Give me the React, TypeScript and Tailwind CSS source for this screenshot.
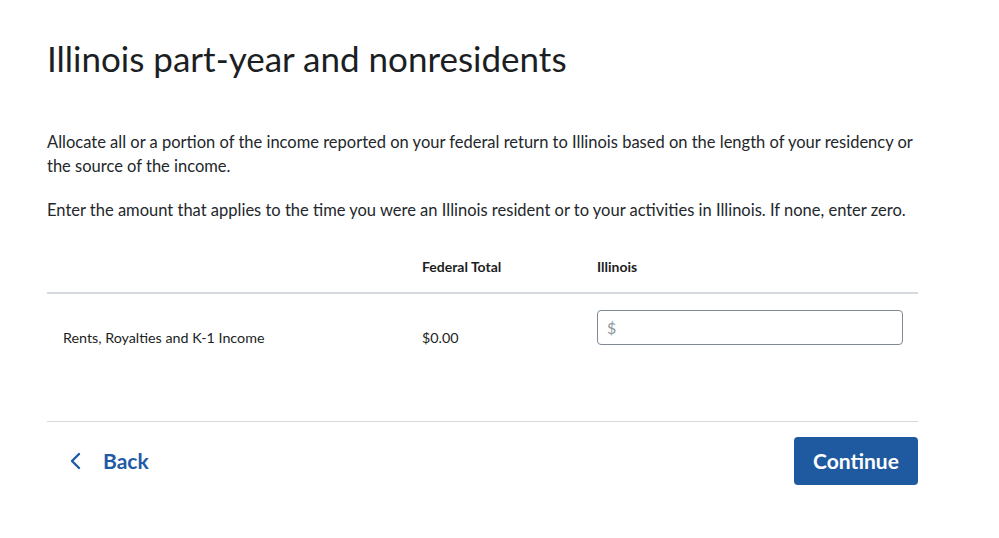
import React from "react";

export default function App() {
  return (
    <div className="w-[999px] h-[538px] bg-white text-[#1b1e22]" style={{ fontFamily: "Lato, 'Noto Sans', sans-serif" }}>
      <div className="ml-[47px] w-[871px] pt-[36px]">
        <h1 className="text-[35px] leading-[44px] font-normal text-[#1b1e22]">Illinois part-year and nonresidents</h1>
        <p className="mt-[50px] text-[16.5px] leading-[24px] text-[#23272b]">
          Allocate all or a portion of the income reported on your federal return to Illinois based on the length of your residency or the source of the income.
        </p>
        <p className="mt-[20px] text-[16.5px] leading-[24px] text-[#23272b]">
          Enter the amount that applies to the time you were an Illinois resident or to your activities in Illinois. If none, enter zero.
        </p>
        <div className="mt-[35px] flex items-center leading-[20px] pb-[15px] border-b-2 border-[#d6dadf] text-[14px] font-bold">
          <div className="w-[375px]" />
          <div className="w-[175px]">Federal Total</div>
          <div>Illinois</div>
        </div>
        <div className="flex h-[128px] border-b border-[#d6dadf] text-[14.3px]">
          <div className="w-[375px] pl-[16px] pt-[33px]">Rents, Royalties and K-1 Income</div>
          <div className="w-[175px] pt-[33px]">$0.00</div>
          <div className="pt-[16px]">
            <div className="w-[306px] h-[35px] border border-[#7f8a96] rounded-[4px] flex items-center px-[9px] text-[16px] text-[#8d96a0]">$</div>
          </div>
        </div>
        <div className="flex items-center justify-between pt-[15px]">
          <button className="flex items-center gap-[20px] pl-[22px] text-[#1f5aa6] text-[21px] font-bold">
            <svg width="14" height="18" viewBox="0 0 14 18" fill="none">
              <path d="M10 2 L3 9 L10 16" stroke="#1f5aa6" strokeWidth="2.4" strokeLinecap="round" strokeLinejoin="round" />
            </svg>
            Back
          </button>
          <button className="w-[124px] h-[48px] rounded-[4px] bg-[#1f5aa1] text-white text-[21px] font-bold">Continue</button>
        </div>
      </div>
    </div>
  );
}
